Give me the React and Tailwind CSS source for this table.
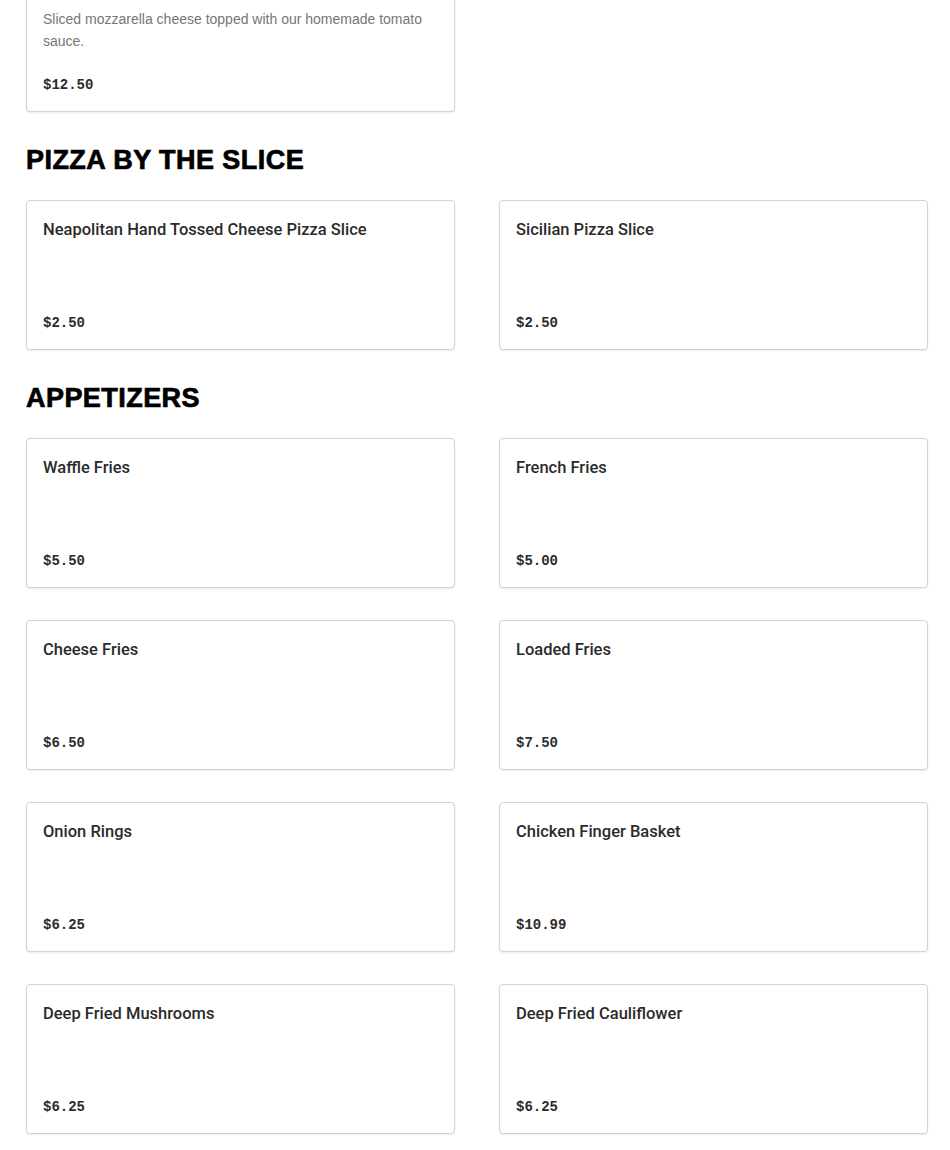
const sections = [
  {
    title: "PIZZA BY THE SLICE",
    items: [
      { name: "Neapolitan Hand Tossed Cheese Pizza Slice", price: "$2.50" },
      { name: "Sicilian Pizza Slice", price: "$2.50" },
    ],
  },
  {
    title: "APPETIZERS",
    items: [
      { name: "Waffle Fries", price: "$5.50" },
      { name: "French Fries", price: "$5.00" },
      { name: "Cheese Fries", price: "$6.50" },
      { name: "Loaded Fries", price: "$7.50" },
      { name: "Onion Rings", price: "$6.25" },
      { name: "Chicken Finger Basket", price: "$10.99" },
      { name: "Deep Fried Mushrooms", price: "$6.25" },
      { name: "Deep Fried Cauliflower", price: "$6.25" },
    ],
  },
];

function MenuCard({ name, description, price }) {
  return (
    <div className="flex min-h-[150px] flex-col justify-between rounded-[4px] border border-[#d2d2d2] bg-white px-4 pt-4 pb-[16px] shadow-[0_1px_2px_rgba(0,0,0,0.08)]">
      <div>
        <h3 className="pt-px font-['Roboto',sans-serif] text-[16.5px] leading-6 font-medium text-[#2b2b2b]">
          {name}
        </h3>
        {description && (
          <p className="mt-2 text-[14px] leading-[22px] text-[#767676]">{description}</p>
        )}
      </div>
      <p className="mt-[23px] font-['Liberation_Mono',monospace] text-[14px] leading-5 font-bold text-[#2b2b2b]">
        {price}
      </p>
    </div>
  );
}

export default function App() {
  return (
    <div className="min-h-[1150px] overflow-hidden bg-white font-['Liberation_Sans',Arial,sans-serif]">
      <div className="-mt-[42px] pr-[22px] pl-[26px] pb-10">
        {/* the page is scrolled: only the bottom of the last whole pie card shows */}
        <div className="grid grid-cols-2 gap-x-[44px]">
          <MenuCard
            name="Cheese Pizza"
            description="Sliced mozzarella cheese topped with our homemade tomato sauce."
            price="$12.50"
          />
        </div>

        {sections.map((section) => (
          <section key={section.title} className="mt-8">
            <h2 className="mb-6 text-[27px] leading-8 font-black tracking-[0.45px] text-black [-webkit-text-stroke:0.7px_black]">
              {section.title}
            </h2>
            <div className="grid grid-cols-2 gap-x-[44px] gap-y-8">
              {section.items.map((item) => (
                <MenuCard key={item.name} {...item} />
              ))}
            </div>
          </section>
        ))}
      </div>
    </div>
  );
}
